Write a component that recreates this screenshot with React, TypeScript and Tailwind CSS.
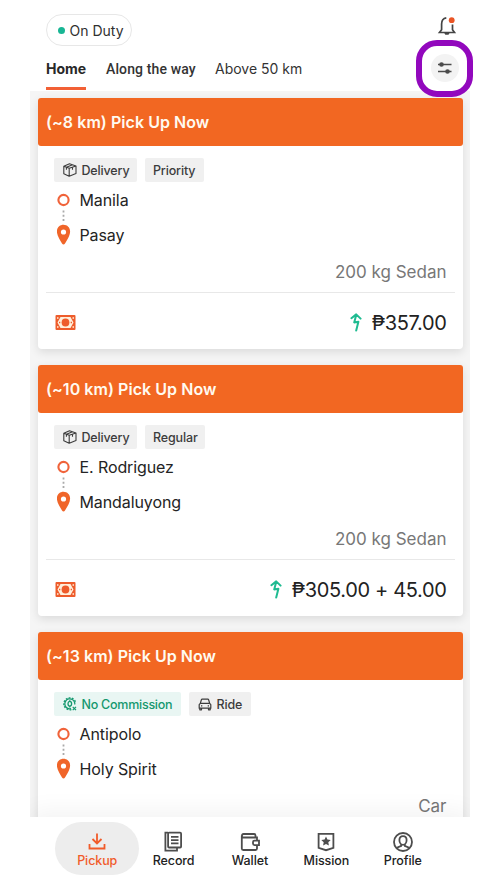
import type { ReactNode } from 'react'
import clsx from 'clsx'

type Tag = { label: string; icon?: 'box' | 'car' | 'fee'; green?: boolean; width: string }
type Order = { id: number; distance: string; tags: Tag[]; from: string; to: string; vehicle: string; price?: string }

const ORDERS: Order[] = [
  { id: 1, distance: '8', tags: [{ label: 'Delivery', icon: 'box', width: 'w-[83px]' }, { label: 'Priority', width: 'w-[59px]' }], from: 'Manila', to: 'Pasay', vehicle: '200 kg Sedan', price: '₱357.00' },
  { id: 2, distance: '10', tags: [{ label: 'Delivery', icon: 'box', width: 'w-[83px]' }, { label: 'Regular', width: 'w-[60px]' }], from: 'E. Rodriguez', to: 'Mandaluyong', vehicle: '200 kg Sedan', price: '₱305.00 + 45.00' },
  { id: 3, distance: '13', tags: [{ label: 'No Commission', icon: 'fee', green: true, width: 'w-[127px]' }, { label: 'Ride', icon: 'car', width: 'w-[62px]' }], from: 'Antipolo', to: 'Holy Spirit', vehicle: 'Car' },
]

const BoxIcon = () => (
  <svg width="14" height="14" viewBox="0 0 14 14" fill="none" stroke="currentColor" strokeWidth="1.1" strokeLinejoin="round">
    <path d="M.8 3.3 6.5.8l6.5 2.1v7.6l-6.8 2.7-5.4-2.4z M.8 3.3l5.4 2 6.8-2.4 M6.2 5.3v7.9 M3.4 4.3 9.6 1.8 M3.4 4.3v2.5 M9.5 4.2v2.5" />
  </svg>
)

const CarIcon = () => (
  <svg width="14" height="13" viewBox="-.5 0 14 13" fill="none" stroke="currentColor" strokeWidth="1.2" strokeLinejoin="round">
    <path d="M1.8 5.4 2.9 1.8q.2-.6.8-.6h5.6q.6 0 .8.6l1.1 3.6zM1.8 5.4.7 6.7v3.5h11.6V6.7l-1.1-1.3M1.3 10.2v1.6H3v-1.6M10 10.2v1.6h1.7v-1.6" />
    <path d="M2.5 7.8h1.3M9.2 7.8h1.3" />
  </svg>
)

const FeeIcon = () => (
  <svg width="14" height="14" viewBox="0 0 14 14" fill="none" stroke="currentColor">
    <circle cx="6.8" cy="6.8" r="5" strokeWidth="1.3" strokeDasharray="25 6.4" transform="rotate(75 6.8 6.8)" />
    <circle cx="6.8" cy="6.8" r="6" strokeWidth="1.3" strokeDasharray="1.8 1.34 1.8 1.34 1.8 1.34 1.8 1.34 1.8 1.34 1.8 1.34 1.8 1.34 1.8 1.34 1.8 10.8" transform="rotate(75 6.8 6.8)" />
    <ellipse cx="6.8" cy="6.8" rx="1.8" ry="2.4" strokeWidth="1.3" />
    <path d="M6.8 3.2v1.3M6.8 9.1v1.3M9.7 9.8l3.3 3.4M13 9.8l-3.3 3.4" strokeWidth="1.2" />
  </svg>
)

const MoneyIcon = () => (
  <svg width="21" height="15" viewBox="0 0 21 15" fill="none">
    <rect x=".5" width="20" height="15" rx="1" fill="#ee5c2b" />
    <path d="M5.5 2h10l3 5.5-3 5.5h-10l-3-5.5z" fill="#fff0dc" />
    <circle cx="10.5" cy="7.5" r="3.9" fill="#ee5c2b" />
    <path d="M2 3h1.5M2 12h1.5M17.5 3H19M17.5 12H19" stroke="#fff0dc" strokeWidth="1.3" />
    <path d="M4 7.5h1.3M15.7 7.5H17" stroke="#ee5c2b" strokeWidth="1.4" />
  </svg>
)

const BoostIcon = () => (
  <svg width="12" height="19" viewBox="0 0 12 19" fill="none" stroke="#1fbb91" strokeWidth="2" strokeLinecap="round" strokeLinejoin="round">
    <path d="M1.4 5.2 6.2 1.4l4.4 4.2M6.2 2 4.2 9.400l4.200-.6L6.200 17.600" />
  </svg>
)

const RouteIcon = () => (
  <svg className="shrink-0" width="14" height="52" viewBox="0 0 14 52" fill="none">
    <circle cx="6.5" cy="7" r="5.1" stroke="#f0633a" strokeWidth="2.1" />
    <path d="M6.5 17.5v2M6.5 21.7v2M6.5 25.9v2" stroke="#aaa" strokeWidth="1.8" />
    <path d="M6.5 31.8c3.8 0 6.6 2.8 6.6 6.6 0 4-3 8.5-5.1 12.1-.8 1.3-2.2 1.3-3 0C2.9 46.9-.1 42.4-.1 38.4c0-3.8 2.8-6.6 6.6-6.6z" fill="#f06529" />
    <circle cx="6.5" cy="39" r="2.6" fill="#fff" />
  </svg>
)

const Chip = ({ tag }: { tag: Tag }) => (
  <span className={clsx('flex h-6 items-center gap-[5px] rounded-[2px] text-[12.5px] font-medium whitespace-nowrap', tag.icon ? 'pl-[9px]' : 'pl-[8.5px]', tag.width, tag.green ? 'bg-[#e9f6f3] tracking-[-0.25px] text-[#15986f]' : 'bg-[#f0f0f0] tracking-[-0.15px] text-[#3c3c3c]')}>
    {tag.icon === 'box' && <BoxIcon />}
    {tag.icon === 'car' && <CarIcon />}
    {tag.icon === 'fee' && <FeeIcon />}
    <span className="pt-[2px]">{tag.label}</span>
  </span>
)

function OrderCard({ order }: { order: Order }) {
  return (
    <article className="h-[251px] shrink-0 rounded-[4px] bg-white shadow-[0_3px_10px_rgba(0,0,0,0.11)]">
      <h2 className="flex h-12 items-center rounded-[3px] bg-[#f26722] pl-[8.5px] text-[16px] font-semibold tracking-[0.05px] text-[#fffaf0]">
        (~{order.distance} km) Pick Up Now
      </h2>
      <div className="flex h-[146px] flex-col px-4 pt-3">
        <div className="flex gap-2">
          {order.tags.map(tag => <Chip key={tag.label} tag={tag} />)}
        </div>
        <div className="mt-[11px] flex gap-[9px] pl-[3px]">
          <RouteIcon />
          <div className="flex flex-col gap-[15px] text-[16px] leading-5 tracking-[-0.1px] text-[#242424]">
            <span className="-mt-[3px]">{order.from}</span>
            <span>{order.to}</span>
          </div>
        </div>
        <p className="mt-[15px] text-right text-[17px] leading-6 text-[#777]">{order.vehicle}</p>
      </div>
      {order.price && (
        <div className="mx-2 flex h-[57px] items-center border-t border-[#e8e8e8] pt-[3px] pr-2 pl-[9px]">
          <MoneyIcon />
          <span className="ml-auto flex items-center gap-[10px] text-[20px] tracking-[-0.35px] text-[#222]">
            <BoostIcon />
            {order.price}
          </span>
        </div>
      )}
    </article>
  )
}

const NavIcon = ({ children }: { children: ReactNode }) => (
  <svg width="22" height="22" viewBox="0 0 22 22" fill="none" stroke="currentColor" strokeWidth="1.8">{children}</svg>
)

const NAV = [
  { label: 'Pickup', icon: <path d="M11 2.5V12M6.5 8l4.5 4.5L15.5 8M3.5 13v4.5h15V13" /> },
  {
    label: 'Record',
    icon: (
      <>
        <rect x="5.1" y="1.7" width="13" height="14.8" rx="1" />
        <path d="M5.1 1.7H2.4v18H14v-3.2M8 5.8h7.5M8 9.1h7.5M8 12.4h7.5" />
      </>
    ),
  },
  {
    label: 'Wallet',
    icon: (
      <>
        <path d="M18 9V6.5H3M3 6.5v-2Q3 3 4.5 3H15q1.5 0 1.5 1.5v2M2.8 4.5v13q0 1.5 1.5 1.5h12.2q1.5 0 1.5-1.5V15" />
        <path d="M20 9.6h-4.5q-1.5 0-1.5 1.5v1.5q0 1.5 1.5 1.5H20z" />
      </>
    ),
  },
  {
    label: 'Mission',
    icon: (
      <>
        <path d="M3.6 2.9h14.8v14L11 19.2l-7.4-2.3z" />
        <path d="m11 5.6 1.4 3 3.3.4-2.4 2.3.6 3.3-2.9-1.6-2.9 1.6.6-3.3L6.3 9l3.3-.4z" fill="currentColor" stroke="none" />
      </>
    ),
  },
  {
    label: 'Profile',
    icon: (
      <>
        <circle cx="11" cy="11" r="9" />
        <path d="M11 5.1c2.3 0 3.6 1.5 3.6 3.9s-1.5 4.8-3.6 4.8-3.6-2.4-3.6-4.800S8.700 5.100 11 5.100zM4.800 17.300c.8-1.500 2.500-1.700 4.300-2.300v-1.600M17.200 17.300c-.8-1.500-2.500-1.700-4.300-2.300v-1.600" />
      </>
    ),
  },
]

function Header() {
  return (
    <header className="relative z-10 flex h-[91px] shrink-0 justify-between bg-white pr-[11px] pl-4">
      <div>
        <button className="mt-[14px] flex h-8 w-[86px] items-center gap-[5px] rounded-full border border-[#e7e7e7] pl-[10.5px] text-[14px] text-[#303030]">
          <span className="h-[7px] w-[7px] rounded-full bg-[#18b694]" />
          On Duty
        </button>
        <nav className="mt-[13px] flex font-[Roboto] text-[14px] leading-5 whitespace-nowrap text-[#333]">
          <a className="h-[31px] w-10 border-b-3 border-[#f26035] font-[Inter] font-bold text-[#282828]">Home</a>
          <a className="ml-5 w-[91px] font-medium tracking-[0.13px]">Along the way</a>
          <a className="ml-[18px] font-[Inter]">Above 50 km</a>
        </nav>
      </div>
      <div className="flex flex-col items-center">
        <svg className="mt-[15px] ml-[3px]" width="20" height="21" viewBox="0 0 20 21" fill="none">
          <path d="M9.3 2.8C5.8 3.3 4.6 5.5 4.6 9v5.7l-2.1 2.8h15l-2-2.8V9.500" stroke="#444" strokeWidth="1.7" />
          <path d="M7.3 18h5.2l-1 1.8H8.300z" fill="#444" />
          <circle cx="14.7" cy="5.2" r="2.9" fill="#ea5525" />
        </svg>
        <button className="relative mt-[18px] flex h-7 w-7 items-center justify-center rounded-full bg-[#f3f3f3] pr-px">
          <svg width="15" height="14" viewBox="0 0 15 14" fill="none" stroke="#4b4b4b" strokeWidth="1.5">
            <path d="M1 3.5h13.5M1 10.5h13.5" />
            <circle cx="4.5" cy="3.5" r="2.3" fill="#4b4b4b" stroke="none" />
            <circle cx="10.5" cy="10.5" r="2.3" fill="#4b4b4b" stroke="none" />
          </svg>
          <span className="absolute -top-[14px] -left-[15px] h-[57px] w-[57px] rounded-[21px] border-6 border-[#9208bd]" />
        </button>
      </div>
    </header>
  )
}

export default function App() {
  return (
    <div className="flex h-[888px] w-[500px] justify-center overflow-hidden bg-white font-[Inter,'Liberation_Sans',sans-serif]">
      <div className="flex w-[440px] flex-col">
        <Header />
        <main className="flex h-[726px] shrink-0 flex-col gap-4 overflow-hidden bg-[#f5f5f5] px-[7.5px] pt-[7px]">
          {ORDERS.map(order => <OrderCard key={order.id} order={order} />)}
        </main>
        <footer className="relative z-10 h-[71px] shrink-0 bg-white pt-[5px] pl-[29px] shadow-[0_-6px_24px_rgba(0,0,0,0.05)] [clip-path:inset(-40px_0_0_0)]">
          <nav className="grid w-[382px] grid-cols-5">
            {NAV.map((item, i) => (
              <div key={item.label} className="flex justify-center">
                <button className={clsx('flex h-[53px] shrink-0 flex-col items-center rounded-[27px] pt-[9px] text-[12.5px] leading-4 font-medium', i === 0 ? 'w-[84px] bg-[#ededed] text-[#f15b2a]' : 'w-[70px] text-[#222]')}>
                  <span className={i === 0 ? '' : 'text-[#4d4d4d]'}><NavIcon>{item.icon}</NavIcon></span>
                  <span className="tracking-[-0.1px]">{item.label}</span>
                </button>
              </div>
            ))}
          </nav>
        </footer>
      </div>
    </div>
  )
}
